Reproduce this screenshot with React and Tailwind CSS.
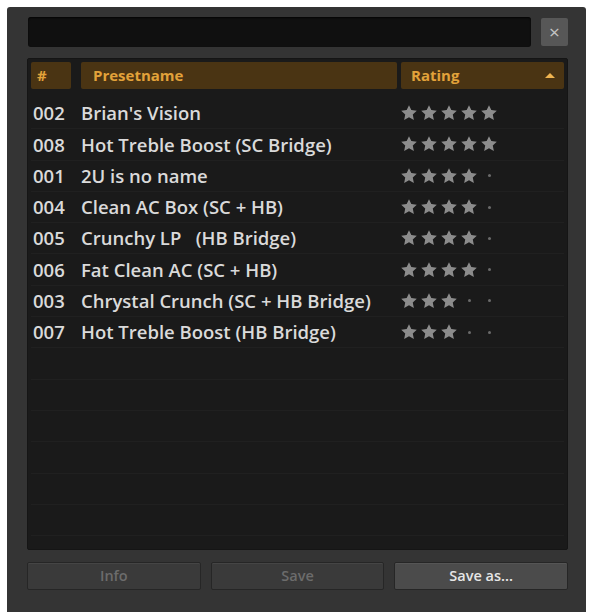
const PRESETS = [
  { id: '002', name: "Brian's Vision", rating: 5 },
  { id: '008', name: 'Hot Treble Boost (SC Bridge)', rating: 5 },
  { id: '001', name: '2U is no name', rating: 4 },
  { id: '004', name: 'Clean AC Box (SC + HB)', rating: 4 },
  { id: '005', name: 'Crunchy LP\u00a0\u00a0 (HB Bridge)', rating: 4 },
  { id: '006', name: 'Fat Clean AC (SC + HB)', rating: 4 },
  { id: '003', name: 'Chrystal Crunch (SC + HB Bridge)', rating: 3 },
  { id: '007', name: 'Hot Treble Boost (HB Bridge)', rating: 3 },
];

const EMPTY_ROWS = 6;

function Star() {
  return (
    <svg width="18" height="18" viewBox="0 0 24 24" className="text-[#8c8c8c]">
      <path
        fill="currentColor"
        d="M12 1.5l3.1 6.6 7.3.9-5.4 5 1.5 7.2L12 17.7l-6.5 3.5L7 14l-5.4-5 7.3-.9z"
      />
    </svg>
  );
}

function Rating({ value }) {
  return (
    <div className="flex items-center gap-[2px]">
      {[0, 1, 2, 3, 4].map((i) =>
        i < value ? (
          <Star key={i} />
        ) : (
          <span key={i} className="flex w-[18px] justify-center">
            <span className="block h-[3px] w-[3px] rounded-full bg-[#6a6a6a]" />
          </span>
        )
      )}
    </div>
  );
}

function Button({ children, active }) {
  return (
    <button
      className={`h-[28px] flex-1 rounded-[2px] border border-[#262626] text-[14.5px] font-semibold shadow-[inset_0_1px_0_rgba(255,255,255,0.06)] ${
        active ? 'bg-[#4b4b4b] text-[#e6e6e6]' : 'bg-[#3a3a3a] text-[#6c6c6c]'
      }`}
    >
      {children}
    </button>
  );
}

export default function App() {
  return (
    <div className="h-[612px] w-[590px] bg-white pl-[7px] pr-[4px] pt-[7px]" style={{ fontFamily: '"Open Sans", "Noto Sans", sans-serif' }}>
      <div className="flex h-[605px] flex-col rounded-t-[3px] bg-[#343434] pl-[20px] pr-[18px] pt-[10px]">
        {/* search row */}
        <div className="flex items-center gap-[10px]">
          <div className="ml-[1px] h-[30px] flex-1 rounded-[3px] bg-[#101010] shadow-[inset_0_1px_2px_rgba(0,0,0,0.8)]" />
          <button className="flex h-[28px] w-[27px] items-center justify-center rounded-[2px] bg-[#575757] text-[19px] leading-none text-[#c4c4c4]">
            ×
          </button>
        </div>

        {/* list */}
        <div className="mt-[11px] h-[492px] overflow-hidden rounded-[2px] border border-[#151515] bg-[#1a1a1a] p-[3px]">
          <div className="flex h-[27px] text-[15px] font-bold text-[#e2a23a]">
            <div className="flex w-[40px] items-center rounded-[2px] bg-[#4a3413] pl-[6px]">#</div>
            <div className="ml-[10px] flex flex-1 items-center rounded-[2px] bg-[#4a3413] pl-[12px]">Presetname</div>
            <div className="ml-[4px] flex w-[163px] items-center justify-between rounded-[2px] bg-[#4a3413] pl-[10px] pr-[9px]">
              <span>Rating</span>
              <span className="block h-0 w-0 border-x-[5px] border-b-[5px] border-x-transparent border-b-[#f0b450]" />
            </div>
          </div>

          <div className="mt-[9px]">
            {PRESETS.map((p) => (
              <div key={p.id} className="flex h-[31.3px] items-center border-b border-[#202020] text-[18.5px] font-semibold text-[#dadada]">
                <span className="w-[50px] pl-[2px]">{p.id}</span>
                <span className="flex-1 whitespace-nowrap">{p.name}</span>
                <div className="w-[164px]">
                  <Rating value={p.rating} />
                </div>
              </div>
            ))}
            {Array.from({ length: EMPTY_ROWS }).map((_, i) => (
              <div key={i} className="h-[31.3px] border-b border-[#202020]" />
            ))}
          </div>
        </div>

        {/* buttons */}
        <div className="mt-[12px] flex gap-[10px]">
          <Button>Info</Button>
          <Button>Save</Button>
          <Button active>Save as...</Button>
        </div>
      </div>
    </div>
  );
}
